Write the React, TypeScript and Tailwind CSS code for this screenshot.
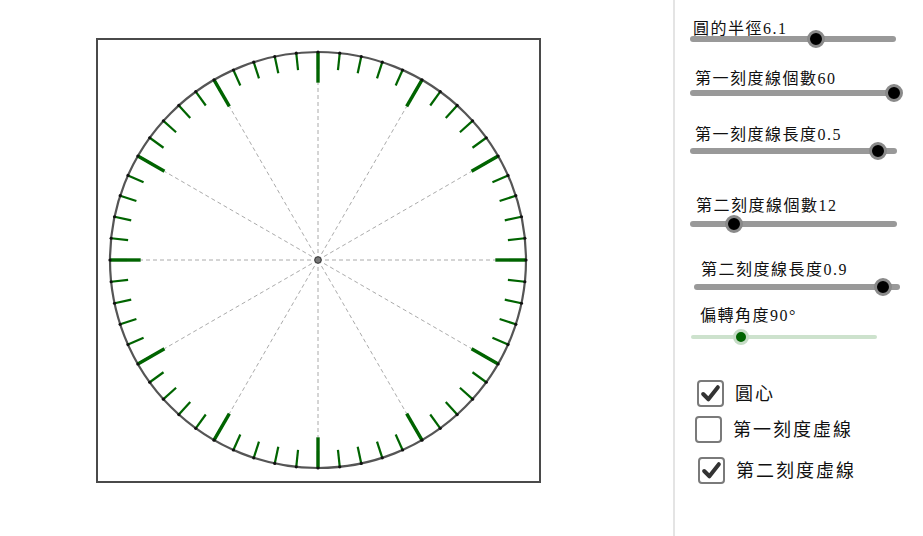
import React from "react";

const font = { fontFamily: '"Liberation Serif", "Noto Sans CJK TC", serif' };

const CX = 318;
const CY = 260;
const R = 208;
const MINOR = (0.5 / 6.1) * R;
const MAJOR = (0.9 / 6.1) * R;

function pt(deg: number, r: number) {
  const a = (deg * Math.PI) / 180;
  return [CX + r * Math.cos(a), CY - r * Math.sin(a)];
}

function Clock() {
  const minor = Array.from({ length: 60 }, (_, i) => 90 + i * 6);
  const major = Array.from({ length: 12 }, (_, i) => 90 + i * 30);
  return (
    <svg width="673" height="536" viewBox="0 0 673 536">
      <rect x="97" y="39" width="443" height="443" fill="white" stroke="#4a4a4a" strokeWidth="2" />
      {major.map((d) => {
        const [x, y] = pt(d, R - MAJOR);
        return (
          <line key={"d" + d} x1={CX} y1={CY} x2={x} y2={y} stroke="#a0a0a0" strokeWidth="0.9" strokeDasharray="4 3" />
        );
      })}
      <circle cx={CX} cy={CY} r={R} fill="none" stroke="#555" strokeWidth="2.2" />
      {minor.map((d) => {
        const [x1, y1] = pt(d, R);
        const [x2, y2] = pt(d, R - MINOR);
        return <line key={"m" + d} x1={x1} y1={y1} x2={x2} y2={y2} stroke="#006400" strokeWidth="2.2" />;
      })}
      {major.map((d) => {
        const [x1, y1] = pt(d, R);
        const [x2, y2] = pt(d, R - MAJOR);
        return <line key={"M" + d} x1={x1} y1={y1} x2={x2} y2={y2} stroke="#006400" strokeWidth="3.4" />;
      })}
      {minor.map((d) => {
        const [x, y] = pt(d, R);
        return <circle key={"p" + d} cx={x} cy={y} r="1.6" fill="#111" />;
      })}
      <circle cx={CX} cy={CY} r="3.3" fill="#777" stroke="#333" strokeWidth="1" />
    </svg>
  );
}

type SliderProps = {
  label: string;
  wrap: string;
  labelCls: string;
  rowCls: string;
  trackCls: string;
  thumbCls: string;
  green?: boolean;
};

function Slider({ label, wrap, labelCls, rowCls, trackCls, thumbCls, green }: SliderProps) {
  return (
    <div className={wrap}>
      <div className={`text-[16px] leading-[18px] tracking-[1.5px] text-[#111] whitespace-nowrap ${labelCls}`}>
        {label}
      </div>
      <div className={`relative h-[16px] ${rowCls}`}>
        <div
          className={`absolute rounded-full ${
            green ? "top-[6px] h-[4px] bg-[#cde2cd]" : "top-[5px] h-[6px] bg-[#999999]"
          } ${trackCls}`}
        />
        <div
          className={`absolute rounded-full border-[3px] ${
            green
              ? "top-[0px] w-[16px] h-[16px] bg-[#006400] border-[#c6dcc6]"
              : "top-[-1px] w-[18px] h-[18px] bg-black border-[#8a8a8a]"
          } ${thumbCls}`}
        />
      </div>
    </div>
  );
}

function Check({ label, checked, wrap }: { label: string; checked: boolean; wrap: string }) {
  return (
    <div className={`flex items-center ${wrap}`}>
      <div className="w-[27px] h-[27px] rounded-[4px] border-2 border-[#7a7a7a] bg-white flex items-center justify-center">
        {checked && (
          <svg width="21" height="21" viewBox="0 0 20 20">
            <path d="M3 10.5 L8 15.5 L17 4" fill="none" stroke="#333" strokeWidth="3.8" strokeLinecap="round" strokeLinejoin="round" />
          </svg>
        )}
      </div>
      <div className="ml-[11px] text-[18px] leading-[20px] tracking-[2px] text-[#111] whitespace-nowrap">{label}</div>
    </div>
  );
}

export default function App() {
  return (
    <div className="w-[923px] h-[536px] flex bg-white overflow-hidden" style={font}>
      <div className="w-[673px] h-full shrink-0">
        <Clock />
      </div>
      <div className="w-[250px] h-full border-l-2 border-[#e4e4e4] flex flex-col">
        <Slider
          label="圓的半徑6.1"
          wrap="mt-[20px]"
          labelCls="pl-[18px]"
          rowCls="-mt-[7px]"
          trackCls="left-[15px] w-[206px]"
          thumbCls="left-[132px]"
        />
        <Slider
          label="第一刻度線個數60"
          wrap="mt-[23px]"
          labelCls="pl-[20px]"
          rowCls="-mt-[3px]"
          trackCls="left-[15px] w-[208px]"
          thumbCls="left-[210px]"
        />
        <Slider
          label="第一刻度線長度0.5"
          wrap="mt-[25px]"
          labelCls="pl-[20px]"
          rowCls="-mt-[1px]"
          trackCls="left-[15px] w-[207px]"
          thumbCls="left-[194px]"
        />
        <Slider
          label="第二刻度線個數12"
          wrap="mt-[38px]"
          labelCls="pl-[21px]"
          rowCls="mt-[1px]"
          trackCls="left-[15px] w-[207px]"
          thumbCls="left-[50px]"
        />
        <Slider
          label="第二刻度線長度0.9"
          wrap="mt-[29px]"
          labelCls="pl-[26px]"
          rowCls="mt-0"
          trackCls="left-[19px] w-[206px]"
          thumbCls="left-[199px]"
        />
        <Slider
          label="偏轉角度90°"
          wrap="mt-[12px]"
          labelCls="pl-[25px]"
          rowCls="mt-[4px]"
          trackCls="left-[16px] w-[186px]"
          thumbCls="left-[58px]"
          green
        />
        <Check label="圓心" checked wrap="mt-[35px] pl-[22px]" />
        <Check label="第一刻度虛線" checked={false} wrap="mt-[9px] pl-[20px]" />
        <Check label="第二刻度虛線" checked wrap="mt-[14px] pl-[23px]" />
      </div>
    </div>
  );
}
